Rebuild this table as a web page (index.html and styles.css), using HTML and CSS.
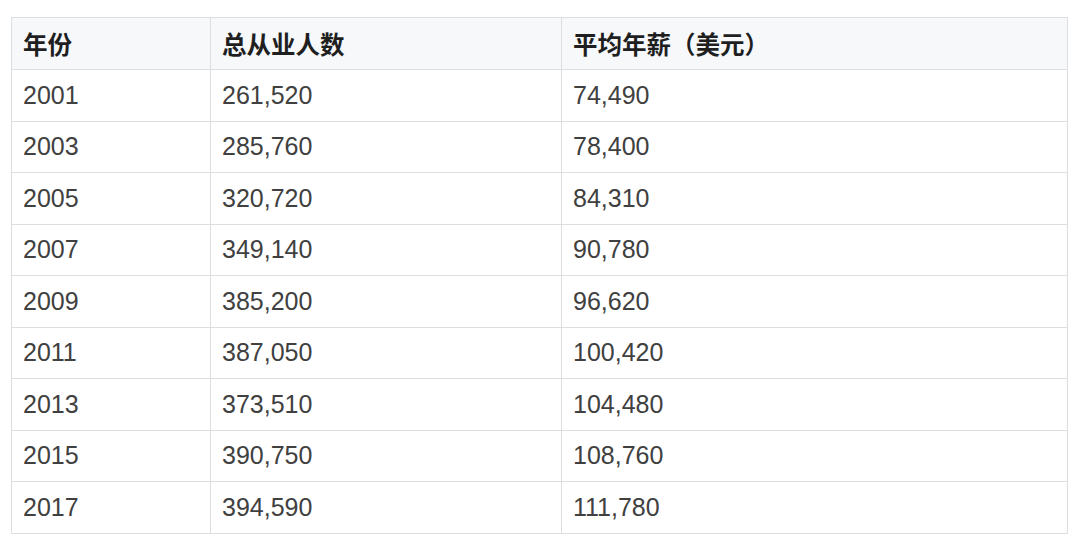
FILE: index.html
```html
<!DOCTYPE html>
<html lang="zh">
<head>
<meta charset="utf-8">
<link rel="stylesheet" href="styles.css">
</head>
<body>
<div class="wrap">
<table class="data">
  <colgroup><col class="c1"><col class="c2"><col class="c3"></colgroup>
  <thead>
    <tr><th>年份</th><th>总从业人数</th><th>平均年薪（美元）</th></tr>
  </thead>
  <tbody>
    <tr><td>2001</td><td>261,520</td><td>74,490</td></tr>
    <tr><td>2003</td><td>285,760</td><td>78,400</td></tr>
    <tr><td>2005</td><td>320,720</td><td>84,310</td></tr>
    <tr><td>2007</td><td>349,140</td><td>90,780</td></tr>
    <tr><td>2009</td><td>385,200</td><td>96,620</td></tr>
    <tr><td>2011</td><td>387,050</td><td>100,420</td></tr>
    <tr><td>2013</td><td>373,510</td><td>104,480</td></tr>
    <tr><td>2015</td><td>390,750</td><td>108,760</td></tr>
    <tr><td>2017</td><td>394,590</td><td>111,780</td></tr>
  </tbody>
</table>
</div>
</body>
</html>
```

FILE: styles.css
```css
html, body {
  margin: 0;
  padding: 0;
  background: #ffffff;
}
.wrap {
  padding: 17px 12px 0 11px;
}
.data {
  width: 1056px;
  border-collapse: collapse;
  table-layout: fixed;
  font-family: "Liberation Sans", "Noto Sans CJK SC", sans-serif;
  font-size: 25px;
  color: #404040;
}
.c1 { width: 199px; }
.c2 { width: 351px; }
.c3 { width: 506px; }
.data th, .data td {
  border: 1.5px solid #dcdee1;
  padding: 0 11px;
  text-align: left;
  vertical-align: middle;
  white-space: nowrap;
}
.data th {
  height: 51px;
  background: #f6f8fa;
  font-family: "Noto Sans CJK SC", sans-serif;
  font-weight: 700;
  font-size: 24.5px;
  color: #1f1f1f;
}
.data td {
  height: 50.5px;
}
```
